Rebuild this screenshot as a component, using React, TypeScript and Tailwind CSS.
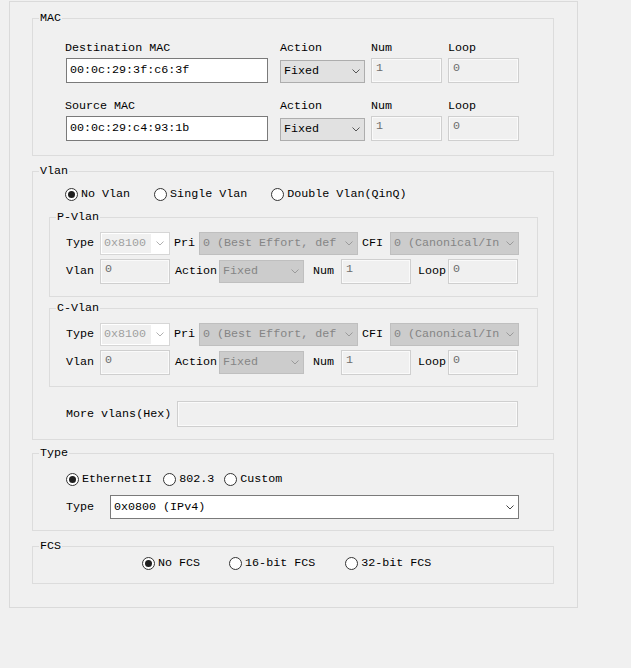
import type { ReactNode } from "react";

const Chevron = ({ color }: { color: string }) => (
  <svg width="8" height="5" viewBox="0 0 8 5" className="shrink-0 mr-[4px]">
    <polyline points="0.5,0.5 4,4 7.5,0.5" fill="none" stroke={color} strokeWidth="1" />
  </svg>
);

const Group = ({ title, className, children }: { title: string; className: string; children: ReactNode }) => (
  <fieldset className={`border border-[#dcdcdc] ${className}`}>
    <legend className="ml-[6px] px-[1px] leading-[13px]">{title}</legend>
    {children}
  </fieldset>
);

const Radio = ({ label, checked, className = "" }: { label: string; checked?: boolean; className?: string }) => (
  <label className={`flex items-center gap-[3px] h-[13px] ${className}`}>
    <span className="flex items-center justify-center w-[13px] h-[13px] rounded-full border border-[#333333] bg-white">
      {checked && <span className="w-[7px] h-[7px] rounded-full bg-[#1f1f1f]" />}
    </span>
    <span className="whitespace-nowrap">{label}</span>
  </label>
);

// enabled edit box
const Edit = ({ value, className }: { value: string; className: string }) => (
  <div className={`border border-[#7a7a7a] bg-white pl-[3px] flex items-center ${className}`}>{value}</div>
);

// greyed-out edit box
const Off = ({ value, className }: { value: string; className: string }) => (
  <div className={`border border-[#cfcfcf] bg-[#f0f0f0] shadow-[inset_0_0_0_1px_#fafafa] pl-[4px] pt-[3px] text-[#6d6d6d] ${className}`}>
    {value}
  </div>
);

type Tone = "gray" | "off" | "white";

const Combo = ({ value, tone, className }: { value: string; tone: Tone; className: string }) => {
  const look = {
    gray: "bg-[#e1e1e1] border-[#adadad] text-black",
    off: "bg-[#cccccc] border-[#bfbfbf] text-[#858585]",
    white: "bg-white border-[#7a7a7a] text-black",
  }[tone];
  const arrow = { gray: "#555555", off: "#9a9a9a", white: "#444444" }[tone];
  return (
    <div className={`flex items-center border ${look} ${className}`}>
      <span className="flex-1 min-w-0 overflow-hidden whitespace-nowrap pl-[3px]">{value}</span>
      <Chevron color={arrow} />
    </div>
  );
};

const TypeCombo = () => (
  <div className="flex w-[70px] h-[23px] border border-[#d6d6d6] bg-white p-[1px]">
    <div className="w-[49px] bg-[#f0f0f0] pl-[2px] flex items-center text-[#a0a0a0]">0x8100</div>
    <div className="flex-1 flex items-center justify-end">
      <Chevron color="#b0b0b0" />
    </div>
  </div>
);

const MacRow = ({ label, mac, className = "" }: { label: string; mac: string; className?: string }) => (
  <div className={`flex pl-[32px] ${className}`}>
    <div className="flex flex-col w-[203px]">
      <span>{label}</span>
      <Edit value={mac} className="mt-[3px] ml-[1px] w-[202px] h-[25px]" />
    </div>
    <div className="flex flex-col w-[85px] ml-[12px]">
      <span>Action</span>
      <Combo value="Fixed" tone="gray" className="mt-[5px] w-[85px] h-[23px]" />
    </div>
    <div className="flex flex-col w-[71px] ml-[6px]">
      <span>Num</span>
      <Off value="1" className="mt-[3px] w-[71px] h-[25px]" />
    </div>
    <div className="flex flex-col w-[71px] ml-[6px]">
      <span>Loop</span>
      <Off value="0" className="mt-[3px] w-[71px] h-[25px]" />
    </div>
  </div>
);

const VlanTag = ({ title, className }: { title: string; className: string }) => (
  <Group title={title} className={`ml-[16px] w-[489px] ${className}`}>
    <div className="flex items-center pl-[16px] pt-[8px] h-[31px]">
      <span className="w-[34px]">Type</span>
      <TypeCombo />
      <span className="w-[25px] ml-[4px]">Pri</span>
      <Combo value="0 (Best Effort, def" tone="off" className="w-[159px] h-[23px]" />
      <span className="w-[28px] ml-[4px]">CFI</span>
      <Combo value="0 (Canonical/In" tone="off" className="w-[129px] h-[23px]" />
    </div>
    <div className="flex items-center pl-[16px] mt-[4px]">
      <span className="w-[34px]">Vlan</span>
      <Off value="0" className="w-[70px] h-[25px]" />
      <span className="w-[44px] ml-[5px]">Action</span>
      <Combo value="Fixed" tone="off" className="w-[85px] h-[23px]" />
      <span className="w-[28px] ml-[9px]">Num</span>
      <Off value="1" className="w-[70px] h-[25px]" />
      <span className="w-[30px] ml-[7px]">Loop</span>
      <Off value="0" className="w-[70px] h-[25px]" />
    </div>
  </Group>
);

export default function App() {
  return (
    <div className="w-[631px] h-[668px] bg-[#f0f0f0] pt-[1px] pl-[9px] text-black text-[11.7px] leading-[13px] font-['Liberation_Mono','Courier_New',monospace]">
      <div className="flex flex-col w-[569px] h-[607px] border border-[#dadada] pl-[22px] pt-[10px]">
        <Group title="MAC" className="w-[522px] h-[144px]">
          <MacRow label="Destination MAC" mac="00:0c:29:3f:c6:3f" className="pt-[17px]" />
          <MacRow label="Source MAC" mac="00:0c:29:c4:93:1b" className="mt-[17px]" />
        </Group>

        <Group title="Vlan" className="w-[522px] h-[275px] mt-[9px]">
          <div className="flex pl-[32px] pt-[10px] gap-[24px]">
            <Radio label="No Vlan" checked />
            <Radio label="Single Vlan" />
            <Radio label="Double Vlan(QinQ)" />
          </div>
          <VlanTag title="P-Vlan" className="h-[86px] mt-[10px]" />
          <VlanTag title="C-Vlan" className="h-[85px] mt-[5px]" />
          <div className="flex items-center pl-[33px] mt-[14px]">
            <span className="w-[111px]">More vlans(Hex)</span>
            <div className="w-[341px] h-[26px] border border-[#cfcfcf] bg-[#f0f0f0] shadow-[inset_0_0_0_1px_#fafafa]" />
          </div>
        </Group>

        <Group title="Type" className="w-[522px] h-[84px] mt-[7px]">
          <div className="flex pl-[33px] pt-[13px]">
            <Radio label="EthernetII" checked />
            <Radio label="802.3" className="ml-[11px]" />
            <Radio label="Custom" className="ml-[10px]" />
          </div>
          <div className="flex items-center pl-[33px] mt-[9px]">
            <span className="w-[44px]">Type</span>
            <Combo value="0x0800 (IPv4)" tone="white" className="w-[409px] h-[24px]" />
          </div>
        </Group>

        <Group title="FCS" className="w-[522px] h-[44px] mt-[9px]">
          <div className="flex pl-[109px] pt-[4px]">
            <Radio label="No FCS" checked />
            <Radio label="16-bit FCS" className="ml-[29px]" />
            <Radio label="32-bit FCS" className="ml-[30px]" />
          </div>
        </Group>
      </div>
    </div>
  );
}
